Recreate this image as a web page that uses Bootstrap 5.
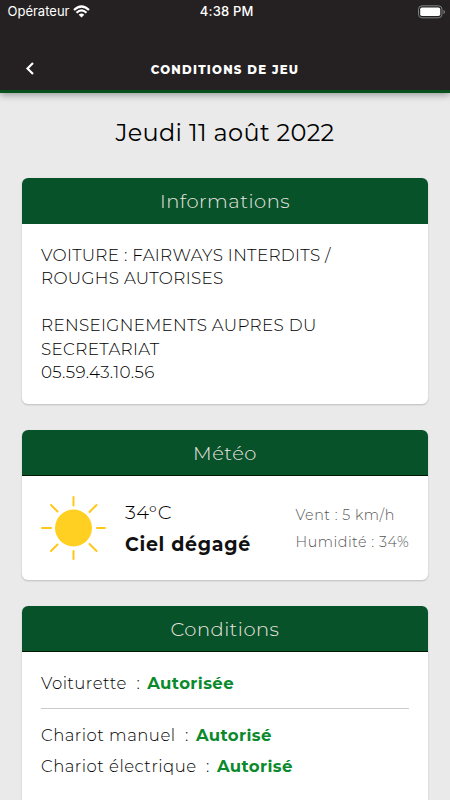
<!DOCTYPE html>
<html lang="fr">
<head>
<meta charset="utf-8">
<meta name="viewport" content="width=device-width, initial-scale=1">
<title>Conditions de jeu</title>
<link href="https://cdn.jsdelivr.net/npm/bootstrap@5.3.0/dist/css/bootstrap.min.css" rel="stylesheet">
<style>
body{background:#eaeaea;color:#000;font-family:Montserrat,Inter,sans-serif;height:800px;overflow:hidden}
main{height:707px;overflow:hidden}
.app-top{background:#252122;height:93px;border-bottom:3px solid #07521c;box-shadow:0 2px 7px rgba(0,0,0,.35);position:relative}
.status{height:23px;font:13px/23px Inter,sans-serif;padding:0 4px 0 7.5px}
.status-side{width:120px}
.clock{font-weight:500;letter-spacing:.2px}
.app-title{font-size:11.7px;font-weight:800;line-height:48px;letter-spacing:1.25px}
.title-bar{padding-top:23px}
.back{width:60px;height:46px}
.day{font-size:24px;font-weight:400;line-height:28px;padding:26px 0 31px;letter-spacing:.32px}
.panel{border:0;border-radius:6px;margin:0 22px 26px;box-shadow:0 1px 2px rgba(0,0,0,.2);overflow:hidden;color:#000}
.panel-head{background:#08522a;color:#ece6e0;height:46px;line-height:46px;font-size:19.5px;font-weight:300;letter-spacing:.5px}
.panel-lined{border-bottom:1px solid #001a08}
.info-body{height:180px;padding:20px 19px 0;font-size:16.8px;line-height:23.4px;font-weight:300;letter-spacing:.33px}
.meteo-body{height:104px;padding:20px 19px}
.sun{width:84px}
.temp{font-size:19.5px;line-height:32px;font-weight:300;letter-spacing:.4px}
.sky{font-size:19px;line-height:33px;font-weight:700;letter-spacing:.72px;color:#111}
.detail{font-size:14.3px;line-height:27px;font-weight:300;letter-spacing:.54px;color:#555;width:113.5px;padding-top:6px;white-space:nowrap}
.cond-body{height:210px;padding:16px 19px;font-size:16.5px;line-height:31px;font-weight:300;letter-spacing:.5px}
.rule{height:1px;background:#cbcbcb;margin:9px 0 11px}
.colon{margin:0 7px 0 9.5px}
.ok{color:#0a8a2c;font-weight:700;letter-spacing:.4px}
</style>
<script src="https://cdn.jsdelivr.net/npm/bootstrap@5.3.0/dist/js/bootstrap.bundle.min.js"></script>
</head>
<body>
<header class="app-top text-white">
  <div class="status d-flex justify-content-between">
    <div class="status-side d-flex align-items-center gap-1"><span>Opérateur</span>
      <svg width="17" height="13" viewBox="0 0 17 13" fill="none" stroke="#fff" stroke-width="2.2"><path d="M1 5Q8.500-2 16 5M3.500 7.700Q8.500 3 13.500 7.700"/><path d="M8.500 12.500L5.700 9.700Q8.500 7.500 11.300 9.700Z" fill="#fff" stroke="none"/></svg></div>
    <span class="clock">4:38 PM</span>
    <div class="status-side d-flex align-items-center justify-content-end">
      <svg width="28" height="14" viewBox="0 0 28 14"><rect x=".5" y=".8" width="23.500" height="12" rx="3.500" fill="none" stroke="#7d857f"/><rect x="2.200" y="2.500" width="20" height="8.600" rx="1.800" fill="#fff"/><path d="M25.500 5v4q1.500-.6 1.500-2t-1.500-2" fill="#7d857f"/></svg></div>
  </div>
  <div class="title-bar d-flex">
    <div class="back d-flex align-items-center justify-content-center"><svg width="12" height="14" viewBox="0 0 12 14" fill="none" stroke="#fff" stroke-width="2.2"><path d="M9 1L3.500 6.500L9 12"/></svg></div>
    <div class="app-title flex-fill text-center">CONDITIONS DE JEU</div><div class="back"></div>
  </div>
</header>
<main>
  <h1 class="day text-center m-0">Jeudi 11 août 2022</h1>
  <section class="card panel"><div class="panel-head text-center">Informations</div>
    <div class="info-body">VOITURE : FAIRWAYS INTERDITS /<br>ROUGHS AUTORISES<br><br>RENSEIGNEMENTS AUPRES DU<br>SECRETARIAT<br>05.59.43.10.56</div></section>
  <section class="card panel"><div class="panel-head panel-lined text-center">Météo</div>
    <div class="meteo-body d-flex">
      <div class="sun flex-shrink-0"><svg width="65" height="65" viewBox="0 0 65 65" stroke="#ffc817" stroke-width="2" stroke-linecap="round"><circle cx="32.500" cy="32" r="18.500" fill="#ffcf22" stroke="none"/><path d="M32.500 1v8.500M32.500 55v8M1 32h9M56 32h8M10 9l6.500 6.500M55.500 9l-7 7M10 55l6.500-6.500M55.500 55l-7-7"/></svg></div>
      <div class="flex-fill"><div class="temp">34°C</div><div class="sky">Ciel dégagé</div></div>
      <div class="detail"><div>Vent : 5 km/h</div><div>Humidité : 34%</div></div>
    </div></section>
  <section class="card panel"><div class="panel-head panel-lined text-center">Conditions</div>
    <div class="cond-body"><div>Voiturette<span class="colon">:</span><span class="ok">Autorisée</span></div><div class="rule"></div><div>Chariot manuel<span class="colon">:</span><span class="ok">Autorisé</span></div><div>Chariot électrique<span class="colon">:</span><span class="ok">Autorisé</span></div></div></section>
</main>
</body></html>
